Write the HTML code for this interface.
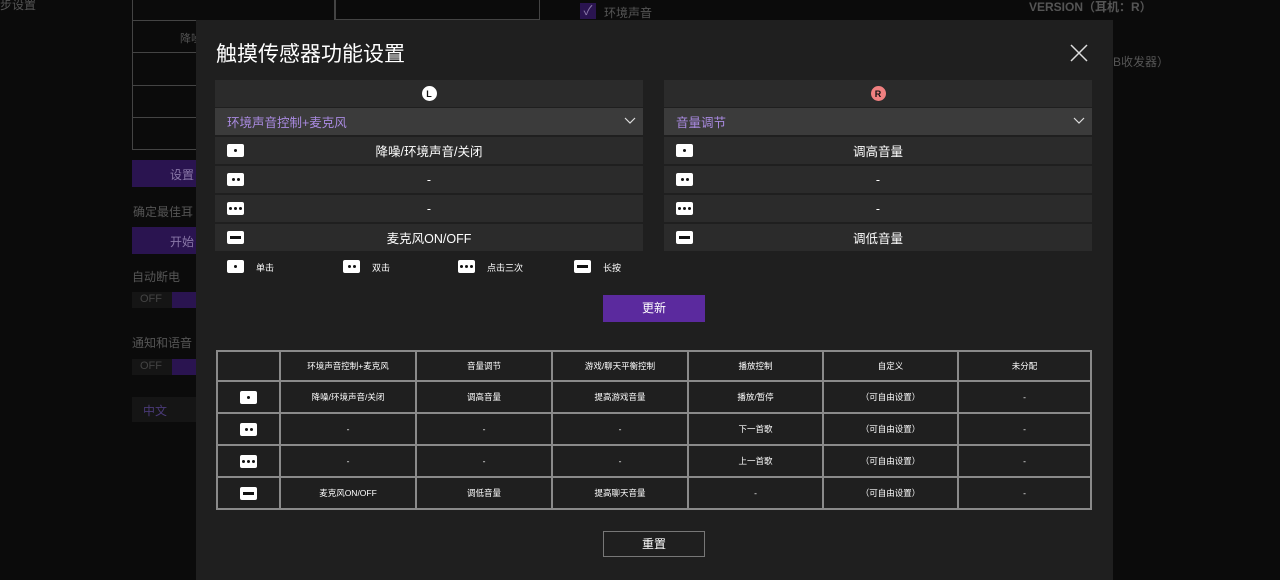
<!DOCTYPE html>
<html><head><meta charset="utf-8"><style>
*{margin:0;padding:0;box-sizing:border-box}
body{width:1280px;height:575px;background:#0b0b0b;position:relative;overflow:hidden;font-family:"Liberation Sans","Noto Sans CJK SC",sans-serif;color:#fff}
.a{position:absolute}
.bg{color:#555;font-size:12px}
.ic{position:absolute;width:17px;height:13px;background:#fff;border-radius:2px;display:flex;align-items:center;justify-content:center;gap:2px}
.ic i{width:3px;height:3px;background:#111;border-radius:50%;display:block}
.ic b{width:11px;height:3px;background:#111;display:block}
.row{position:absolute;height:27px;background:#2b2b2b;font-size:12.5px;display:flex;align-items:center;justify-content:center}
table{position:absolute;left:216px;top:350px;width:876px;border-collapse:collapse;font-size:8.5px}
td{border:2px solid #8a8a8a;text-align:center;height:32px;position:relative}
tr.h td{height:30px}
</style></head><body>
<!-- background page -->
<div class="a bg" style="left:0;top:-4px">步设置</div>
<div class="a" style="left:132px;top:-2px;width:203px;height:152px;border:1px solid #444"></div>
<div class="a" style="left:132px;top:20px;width:203px;border-top:1px solid #444"></div>
<div class="a" style="left:132px;top:52px;width:203px;border-top:1px solid #444"></div>
<div class="a" style="left:132px;top:85px;width:203px;border-top:1px solid #444"></div>
<div class="a" style="left:132px;top:117px;width:203px;border-top:1px solid #444"></div>
<div class="a" style="left:335px;top:-2px;width:205px;height:22px;border:1px solid #444"></div>
<div class="a bg" style="left:180px;top:30px;font-size:11px">降噪</div>
<div class="a" style="left:132px;top:160px;width:70px;height:27px;background:#2a1450;color:#8a78a8;font-size:12px;padding:6px 0 0 38px">设置</div>
<div class="a bg" style="left:133px;top:203px">确定最佳耳</div>
<div class="a" style="left:132px;top:227px;width:70px;height:27px;background:#2a1450;color:#8a78a8;font-size:12px;padding:6px 0 0 38px">开始</div>
<div class="a bg" style="left:132px;top:268px">自动断电</div>
<div class="a" style="left:132px;top:292px;width:70px;height:16px;background:#151515;color:#444;font-size:11px;padding:1px 0 0 8px">OFF</div>
<div class="a" style="left:172px;top:292px;width:25px;height:16px;background:#2a1450"></div>
<div class="a bg" style="left:132px;top:334px">通知和语音</div>
<div class="a" style="left:132px;top:359px;width:70px;height:16px;background:#151515;color:#444;font-size:11px;padding:1px 0 0 8px">OFF</div>
<div class="a" style="left:172px;top:359px;width:25px;height:16px;background:#2a1450"></div>
<div class="a" style="left:132px;top:397px;width:70px;height:25px;background:#151515;color:#4a3a78;font-size:12px;padding:5px 0 0 11px">中文</div>
<div class="a" style="left:580px;top:3px;width:16px;height:16px;background:#2a1450;color:#8a78a8;font-size:13px;line-height:16px;text-align:center">✓</div>
<div class="a bg" style="left:604px;top:4px">环境声音</div>
<div class="a bg" style="left:1029px;top:-2px;font-weight:bold">VERSION（耳机：R）</div>
<div class="a bg" style="left:1113px;top:53px">B收发器）</div>
<!-- modal -->
<div class="a" style="left:196px;top:20px;width:917px;height:560px;background:#1f1f1f"></div>
<div class="a" style="left:216px;top:38px;font-size:21px;color:#fff">触摸传感器功能设置</div>
<svg class="a" style="left:1070px;top:44px" width="18" height="18"><path d="M1 1L17 17M17 1L1 17" stroke="#ddd" stroke-width="1.5"/></svg>
<!-- L panel -->
<div class="row" style="left:215px;top:80px;width:428px"><span style="width:15px;height:15px;border-radius:50%;background:#fff;color:#111;font-size:9px;font-weight:bold;display:flex;align-items:center;justify-content:center">L</span></div>
<div class="row" style="left:215px;top:108px;width:428px;background:#3b3b3b;justify-content:flex-start;padding-left:12px;color:#a98ae0">环境声音控制+麦克风</div>
<svg class="a" style="left:624px;top:117px" width="12" height="8"><path d="M1 1L6 6L11 1" stroke="#ddd" stroke-width="1.2" fill="none"/></svg>
<div class="row" style="left:215px;top:137px;width:428px">降噪/环境声音/关闭</div>
<div class="row" style="left:215px;top:166px;width:428px">-</div>
<div class="row" style="left:215px;top:195px;width:428px">-</div>
<div class="row" style="left:215px;top:224px;width:428px">麦克风ON/OFF</div>
<div class="ic" style="left:227px;top:144px"><i></i></div>
<div class="ic" style="left:227px;top:173px"><i></i><i></i></div>
<div class="ic" style="left:227px;top:202px"><i></i><i></i><i></i></div>
<div class="ic" style="left:227px;top:231px"><b></b></div>
<!-- R panel -->
<div class="row" style="left:664px;top:80px;width:428px"><span style="width:15px;height:15px;border-radius:50%;background:#f08080;color:#111;font-size:9px;font-weight:bold;display:flex;align-items:center;justify-content:center">R</span></div>
<div class="row" style="left:664px;top:108px;width:428px;background:#3b3b3b;justify-content:flex-start;padding-left:12px;color:#a98ae0">音量调节</div>
<svg class="a" style="left:1073px;top:117px" width="12" height="8"><path d="M1 1L6 6L11 1" stroke="#ddd" stroke-width="1.2" fill="none"/></svg>
<div class="row" style="left:664px;top:137px;width:428px">调高音量</div>
<div class="row" style="left:664px;top:166px;width:428px">-</div>
<div class="row" style="left:664px;top:195px;width:428px">-</div>
<div class="row" style="left:664px;top:224px;width:428px">调低音量</div>
<div class="ic" style="left:676px;top:144px"><i></i></div>
<div class="ic" style="left:676px;top:173px"><i></i><i></i></div>
<div class="ic" style="left:676px;top:202px"><i></i><i></i><i></i></div>
<div class="ic" style="left:676px;top:231px"><b></b></div>
<!-- legend -->
<div class="ic" style="left:227px;top:260px"><i></i></div><div class="a" style="left:256px;top:261px;font-size:9px">单击</div>
<div class="ic" style="left:343px;top:260px"><i></i><i></i></div><div class="a" style="left:372px;top:261px;font-size:9px">双击</div>
<div class="ic" style="left:458px;top:260px"><i></i><i></i><i></i></div><div class="a" style="left:487px;top:261px;font-size:9px">点击三次</div>
<div class="ic" style="left:574px;top:260px"><b></b></div><div class="a" style="left:603px;top:261px;font-size:9px">长按</div>
<div class="a" style="left:603px;top:295px;width:102px;height:27px;background:#5b2a9e;font-size:12px;text-align:center;line-height:27px">更新</div>
<table>
<tr class="h"><td style="width:63px"></td><td style="width:136px">环境声音控制+麦克风</td><td style="width:136px">音量调节</td><td style="width:136px">游戏/聊天平衡控制</td><td style="width:135px">播放控制</td><td style="width:135px">自定义</td><td>未分配</td></tr>
<tr><td><div class="ic" style="left:22px;top:9px"><i></i></div></td><td>降噪/环境声音/关闭</td><td>调高音量</td><td>提高游戏音量</td><td>播放/暂停</td><td>（可自由设置）</td><td>-</td></tr>
<tr><td><div class="ic" style="left:22px;top:9px"><i></i><i></i></div></td><td>-</td><td>-</td><td>-</td><td>下一首歌</td><td>（可自由设置）</td><td>-</td></tr>
<tr><td><div class="ic" style="left:22px;top:9px"><i></i><i></i><i></i></div></td><td>-</td><td>-</td><td>-</td><td>上一首歌</td><td>（可自由设置）</td><td>-</td></tr>
<tr><td><div class="ic" style="left:22px;top:9px"><b></b></div></td><td>麦克风ON/OFF</td><td>调低音量</td><td>提高聊天音量</td><td>-</td><td>（可自由设置）</td><td>-</td></tr>
</table>
<div class="a" style="left:603px;top:531px;width:102px;height:26px;border:1px solid #777;font-size:12px;text-align:center;line-height:24px">重置</div>
</body></html>
